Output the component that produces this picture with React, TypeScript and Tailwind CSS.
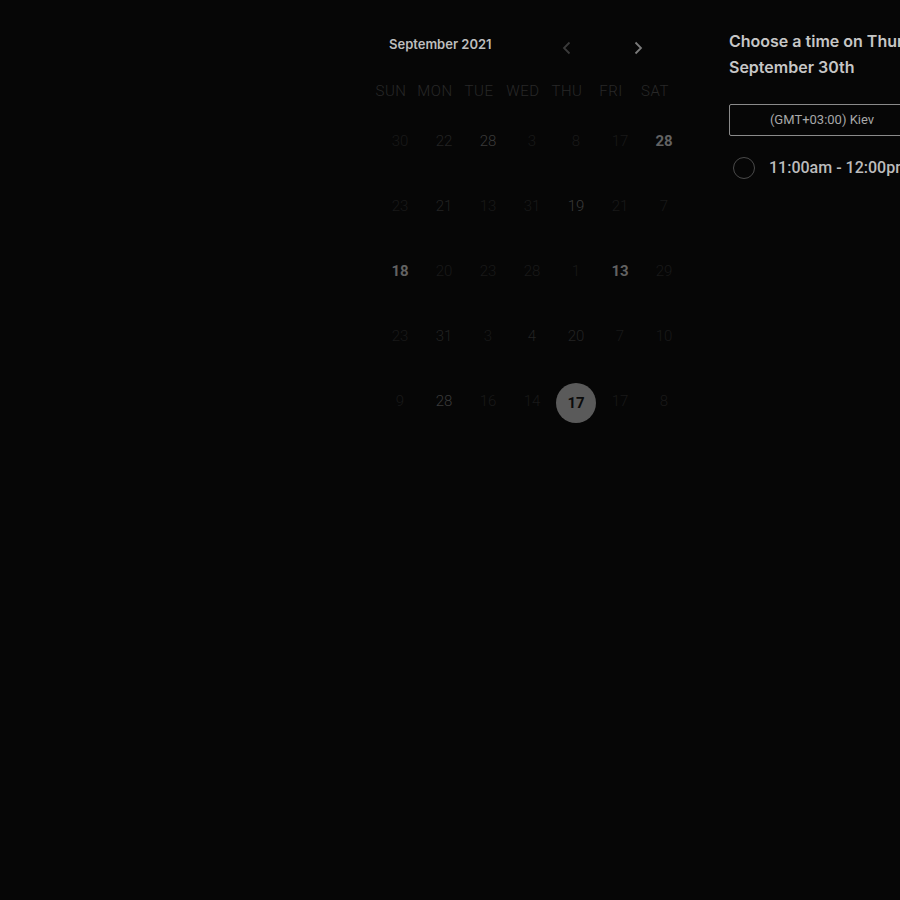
import React from "react";

type Cell = { d: string; c: string; b?: boolean; sel?: boolean };

const A = "text-[#191919]";
const B = "text-[#232323]";
const M = "text-[#3a3a3a]";
const H = "text-[#626262]";

const rows: Cell[][] = [
  [
    { d: "30", c: A },
    { d: "22", c: B },
    { d: "28", c: M },
    { d: "3", c: A },
    { d: "8", c: A },
    { d: "17", c: A },
    { d: "28", c: H, b: true },
  ],
  [
    { d: "23", c: A },
    { d: "21", c: B },
    { d: "13", c: A },
    { d: "31", c: A },
    { d: "19", c: M },
    { d: "21", c: A },
    { d: "7", c: A },
  ],
  [
    { d: "18", c: H, b: true },
    { d: "20", c: A },
    { d: "23", c: A },
    { d: "28", c: A },
    { d: "1", c: A },
    { d: "13", c: H, b: true },
    { d: "29", c: A },
  ],
  [
    { d: "23", c: A },
    { d: "31", c: B },
    { d: "3", c: A },
    { d: "4", c: B },
    { d: "20", c: B },
    { d: "7", c: A },
    { d: "10", c: A },
  ],
  [
    { d: "9", c: A },
    { d: "28", c: M },
    { d: "16", c: A },
    { d: "14", c: A },
    { d: "17", c: "", sel: true },
    { d: "17", c: A },
    { d: "8", c: A },
  ],
];

const days = ["SUN", "MON", "TUE", "WED", "THU", "FRI", "SAT"];

export default function App() {
  return (
    <div
      className="w-[900px] h-[900px] overflow-hidden bg-[#060606] flex"
      style={{ fontFamily: "Roboto, 'Liberation Sans', sans-serif" }}
    >
      <div className="shrink-0 w-[308px] ml-[369px] flex flex-col">
        <div className="flex items-start mt-[35px] h-[24px]">
          <div
            className="w-[192px] pl-[20px] text-[13px] leading-[18px] font-semibold text-[#bdbdbd]"
            style={{ fontFamily: "Inter, 'Liberation Sans', sans-serif" }}
          >
            September 2021
          </div>
          <svg width="12" height="16" viewBox="0 0 12 16" className="mt-[5px]">
            <path d="M8.5 2.5 L3 8 L8.5 13.5" fill="none" stroke="#3a3a3a" strokeWidth="1.8" />
          </svg>
          <div className="w-[59px]" />
          <svg width="12" height="16" viewBox="0 0 12 16" className="mt-[5px]">
            <path d="M3.5 2.5 L9 8 L3.5 13.5" fill="none" stroke="#7a7a7a" strokeWidth="1.8" />
          </svg>
        </div>
        <div className="grid grid-cols-7 mt-[22px] h-[20px] items-center">
          {days.map((d) => (
            <div key={d} className="text-center text-[15px] leading-[20px] font-light text-[#282828] tracking-[0.5px]">
              {d}
            </div>
          ))}
        </div>
        <div className="flex flex-col mt-[7px] ml-[9px] w-[308px]">
          {rows.map((r, i) => (
            <div key={i} className="grid grid-cols-7 h-[65px] items-center">
              {r.map((c, j) =>
                c.sel ? (
                  <div key={j} className="flex justify-center">
                    <div className="w-[40px] h-[40px] mt-[5px] rounded-full bg-[#5a5a5a] flex items-center justify-center text-[15px] font-bold text-[#0b0b0b]">
                      {c.d}
                    </div>
                  </div>
                ) : (
                  <div
                    key={j}
                    className={`text-center text-[15px] leading-[20px] ${c.b ? "font-bold" : "font-light"} ${c.c}`}
                  >
                    {c.d}
                  </div>
                )
              )}
            </div>
          ))}
        </div>
      </div>
      <div className="shrink-0 w-[260px] ml-[52px] flex flex-col">
        <div
          className="mt-[28px] text-[16px] leading-[26px] font-semibold text-[#c6c6c6] whitespace-nowrap"
          style={{ fontFamily: "Inter, 'Liberation Sans', sans-serif" }}
        >
          <div>Choose a time on Thursday,</div>
          <div>September 30th</div>
        </div>
        <div className="mt-[24px] w-[186px] h-[32px] border border-[#8a8a8a] rounded-[2px] flex items-center justify-center text-[13px] text-[#a8a8a8]">
          (GMT+03:00) Kiev
        </div>
        <div className="mt-[20px] flex items-center h-[24px] whitespace-nowrap">
          <div className="ml-[4px] w-[22px] h-[22px] rounded-full border-[1.5px] border-[#4a4a4a]" />
          <div className="ml-[14px] text-[16px] font-medium text-[#bcbcbc]">11:00am - 12:00pm</div>
        </div>
      </div>
    </div>
  );
}
